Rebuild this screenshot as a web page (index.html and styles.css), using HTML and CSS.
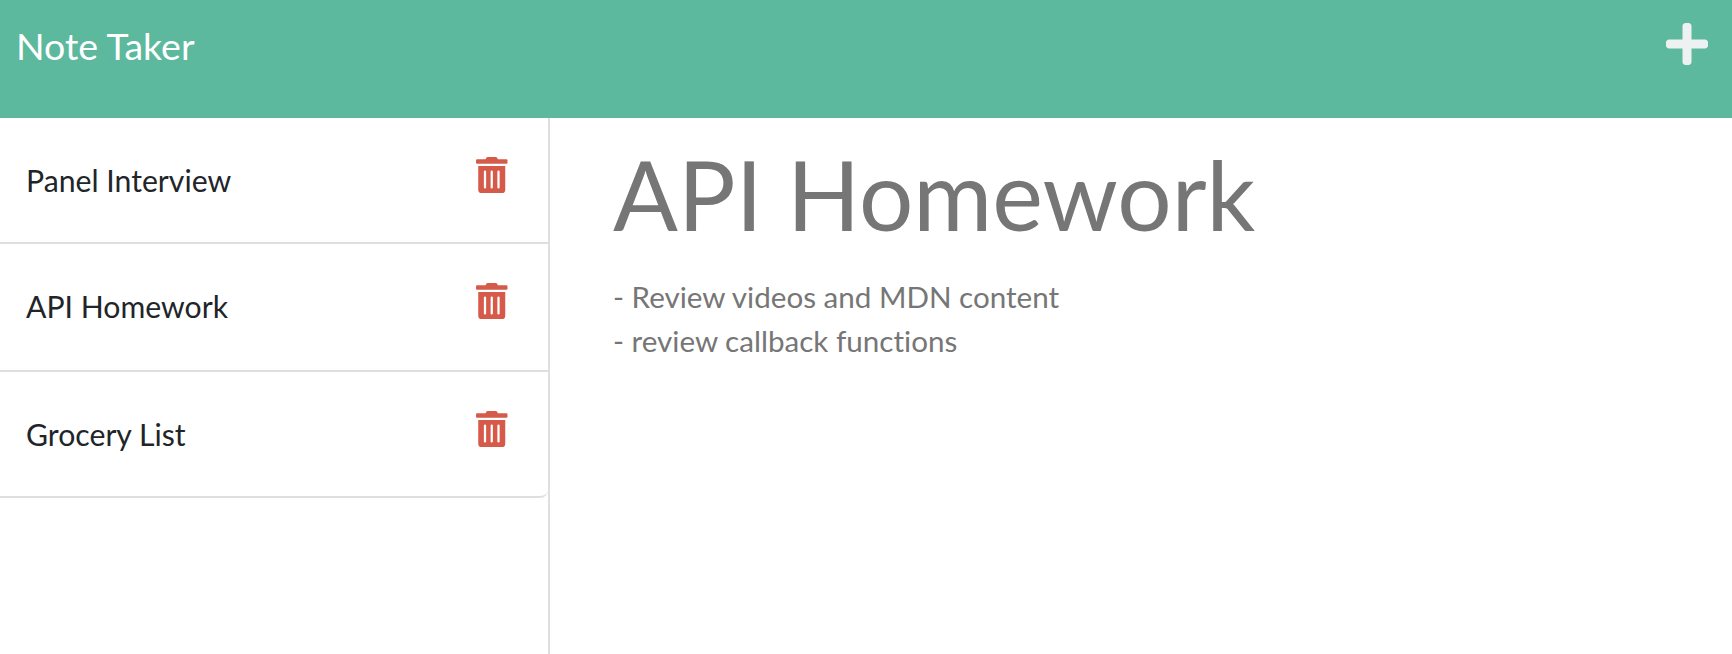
FILE: index.html
```html
<!DOCTYPE html>
<html lang="en">
<head>
<meta charset="UTF-8" />
<meta name="viewport" content="width=device-width, initial-scale=1" />
<title>Note Taker</title>
<link rel="stylesheet" href="styles.css">
</head>

<body>

  <nav class="topbar">
    <a class="brand" href="#">Note Taker</a>
    <svg class="plus-icon" viewBox="0 0 448 512" aria-label="New note"><path d="M416 208H272V64c0-17.67-14.33-32-32-32h-32c-17.67 0-32 14.33-32 32v144H32c-17.67 0-32 14.33-32 32v32c0 17.67 14.33 32 32 32h144v144c0 17.67 14.33 32 32 32h32c17.67 0 32-14.33 32-32V304h144c17.67 0 32-14.33 32-32v-32c0-17.67-14.33-32-32-32z"/></svg>
  </nav>

  <div class="layout">
    <aside class="sidebar">
      <ul class="note-list">
        <li class="note-item">
          <span class="note-title">Panel Interview</span>
          <svg class="trash-icon" viewBox="0 0 448 512"><path d="M32 464a48 48 0 0 0 48 48h288a48 48 0 0 0 48-48V128H32zm272-256a16 16 0 0 1 32 0v224a16 16 0 0 1-32 0zm-96 0a16 16 0 0 1 32 0v224a16 16 0 0 1-32 0zm-96 0a16 16 0 0 1 32 0v224a16 16 0 0 1-32 0zM432 32H312l-9.4-18.7A24 24 0 0 0 281.1 0H166.8a23.72 23.72 0 0 0-21.4 13.3L136 32H16A16 16 0 0 0 0 48v32a16 16 0 0 0 16 16h416a16 16 0 0 0 16-16V48a16 16 0 0 0-16-16z"/></svg>
        </li>
        <li class="note-item">
          <span class="note-title">API Homework</span>
          <svg class="trash-icon" viewBox="0 0 448 512"><path d="M32 464a48 48 0 0 0 48 48h288a48 48 0 0 0 48-48V128H32zm272-256a16 16 0 0 1 32 0v224a16 16 0 0 1-32 0zm-96 0a16 16 0 0 1 32 0v224a16 16 0 0 1-32 0zm-96 0a16 16 0 0 1 32 0v224a16 16 0 0 1-32 0zM432 32H312l-9.4-18.7A24 24 0 0 0 281.1 0H166.8a23.72 23.72 0 0 0-21.4 13.3L136 32H16A16 16 0 0 0 0 48v32a16 16 0 0 0 16 16h416a16 16 0 0 0 16-16V48a16 16 0 0 0-16-16z"/></svg>
        </li>
        <li class="note-item">
          <span class="note-title">Grocery List</span>
          <svg class="trash-icon" viewBox="0 0 448 512"><path d="M32 464a48 48 0 0 0 48 48h288a48 48 0 0 0 48-48V128H32zm272-256a16 16 0 0 1 32 0v224a16 16 0 0 1-32 0zm-96 0a16 16 0 0 1 32 0v224a16 16 0 0 1-32 0zm-96 0a16 16 0 0 1 32 0v224a16 16 0 0 1-32 0zM432 32H312l-9.4-18.7A24 24 0 0 0 281.1 0H166.8a23.72 23.72 0 0 0-21.4 13.3L136 32H16A16 16 0 0 0 0 48v32a16 16 0 0 0 16 16h416a16 16 0 0 0 16-16V48a16 16 0 0 0-16-16z"/></svg>
        </li>
      </ul>
    </aside>

    <main class="note-view">
      <h1 class="note-heading">API Homework</h1>
      <p class="note-body">- Review videos and MDN content<br>- review callback functions</p>
    </main>
  </div>

</body>
</html>
```

FILE: styles.css
```css
html, body {
  height: 100%;
}
body {
  font-family: Lato, "Liberation Sans", sans-serif;
  font-variant-ligatures: none;
  background: #fff;
  display: flex;
  flex-direction: column;
  margin: 0;
  overflow: hidden;
}
.topbar {
  height: 118px;
  flex: none;
  display: flex;
  justify-content: space-between;
  align-items: flex-start;
  background: #5cb99d;
  padding: 0 24px 0 16px;
  box-sizing: border-box;
}
.brand {
  margin-top: 22px;
  font-size: 37.5px;
  line-height: 48px;
  color: #fff;
  text-decoration: none;
}
.plus-icon {
  width: 42px;
  height: 48px;
  margin-top: 20px;
  fill: #eef1f2;
}
.layout {
  flex: 1;
  display: flex;
}
.sidebar {
  width: 550px;
  flex: none;
  box-sizing: border-box;
  border-right: 2px solid #dfdfdf;
}
.note-list {
  list-style: none;
  margin: 0;
  padding: 0;
}
.note-item {
  height: 126px;
  box-sizing: border-box;
  display: flex;
  justify-content: space-between;
  align-items: flex-start;
  padding: 39px 40.5px 0 26px;
  border-bottom: 2px solid #dfdfdf;
  color: #212529;
  font-size: 30.2px;
  line-height: 46px;
}
.note-item:nth-child(2) {
  height: 128px;
}
.note-item:last-child {
  border-bottom-right-radius: 8px;
}
.trash-icon {
  width: 31.5px;
  height: 36px;
  fill: #d65a49;
}
.note-view {
  padding: 0 63px;
  color: #767676;
}
.note-heading {
  margin: 18px 0 24px;
  font-size: 96px;
  font-weight: 400;
  line-height: 115px;
}
.note-body {
  margin: 0;
  font-size: 29.6px;
  line-height: 44px;
}
```
